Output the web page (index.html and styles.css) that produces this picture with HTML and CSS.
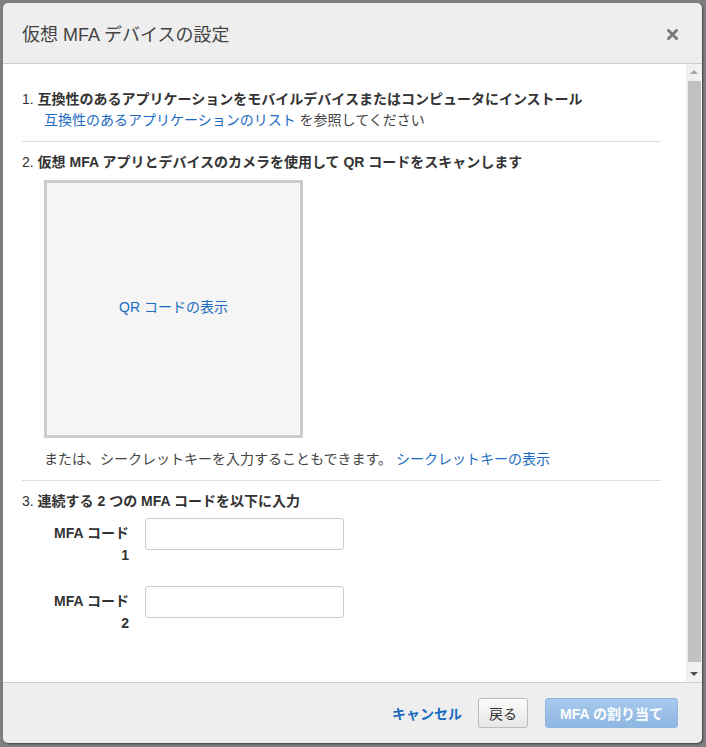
FILE: index.html
```html
<!DOCTYPE html>
<html lang="ja">
<head>
<meta charset="utf-8">
<title>仮想 MFA デバイスの設定</title>
<link rel="stylesheet" href="styles.css">
</head>
<body>
<div class="dialog">
  <div class="header">
    <h1 class="title">仮想 MFA デバイスの設定</h1>
    <span class="close" aria-label="閉じる">
      <svg width="11" height="11" viewBox="0 0 11 11"><path d="M1.5 1.5 L9.5 9.5 M9.5 1.5 L1.5 9.5" stroke="#7a7a7a" stroke-width="3" stroke-linecap="square"/></svg>
    </span>
  </div>
  <div class="body">
    <div class="content">
      <div class="section">
        <div class="step"><span class="num">1.</span> <b>互換性のあるアプリケーションをモバイルデバイスまたはコンピュータにインストール</b></div>
        <div class="indent"><a class="link" href="#">互換性のあるアプリケーションのリスト</a> を参照してください</div>
      </div>
      <div class="sep"></div>
      <div class="section">
        <div class="step"><span class="num">2.</span> <b>仮想 MFA アプリとデバイスのカメラを使用して QR コードをスキャンします</b></div>
        <div class="qr"><a class="link" href="#">QR コードの表示</a></div>
        <div class="indent secret">または、シークレットキーを入力することもできます。 <a class="link" href="#">シークレットキーの表示</a></div>
      </div>
      <div class="sep"></div>
      <div class="section">
        <div class="step"><span class="num">3.</span> <b>連続する 2 つの MFA コードを以下に入力</b></div>
        <div class="row first">
          <label class="lbl">MFA コード<br>1</label>
          <input class="inp" type="text">
        </div>
        <div class="row">
          <label class="lbl">MFA コード<br>2</label>
          <input class="inp" type="text">
        </div>
      </div>
    </div>
    <div class="scrollbar">
      <div class="arrow up"></div>
      <div class="thumb"></div>
      <div class="arrow down"></div>
    </div>
  </div>
  <div class="footer">
    <a class="cancel" href="#">キャンセル</a>
    <button class="btn back">戻る</button>
    <button class="btn primary">MFA の割り当て</button>
  </div>
</div>
</body>
</html>
```
FILE: styles.css
```css
html, body {
  margin: 0;
  padding: 0;
}
body {
  background: #7f7f7f;
  width: 706px;
  height: 747px;
  overflow: hidden;
  font-family: "Liberation Sans", "Noto Sans CJK JP", sans-serif;
  font-size: 14px;
  color: #333;
}
.dialog {
  margin: 3px 0 0 3px;
  width: 699px;
  height: 740px;
  background: #eeeeee;
  border-radius: 5px;
  box-shadow: 1px 1px 2px rgba(0,0,0,0.5);
  display: flex;
  flex-direction: column;
  overflow: hidden;
}
.header {
  height: 60px;
  flex: none;
  display: flex;
  align-items: center;
  justify-content: space-between;
  padding: 0 24px 0 19px;
  border-bottom: 1px solid #cccccc;
}
.title {
  margin: 0;
  font-size: 18px;
  font-weight: normal;
  color: #444;
}
.close {
  display: flex;
  margin-top: 2px;
}
.body {
  flex: 1;
  background: #fff;
  display: flex;
  min-height: 0;
}
.content {
  flex: 1;
  padding: 25px 25px 0 19px;
  line-height: 21px;
}
.step .num { font-weight: normal; }
.step b { font-weight: bold; }
.indent {
  padding-left: 22px;
  color: #444;
}
.link {
  color: #1a6bc1;
  text-decoration: none;
}
.sep {
  height: 1px;
  background: #dddddd;
  margin: 10px 0 10px 0;
}
.qr {
  margin: 7px 0 0 22px;
  width: 253px;
  height: 252px;
  border: 3px solid #cccccc;
  background: #f5f5f5;
  display: flex;
  align-items: center;
  justify-content: center;
}
.qr .link { margin-top: -3px; }
.secret {
  margin-top: 11px;
}
.row {
  display: flex;
  align-items: flex-start;
  margin-top: 20px;
}
.row.first { margin-top: 6px; }
.lbl {
  width: 101px;
  margin-left: 22px;
  padding: 4px 16px 0 0;
  box-sizing: border-box;
  text-align: right;
  font-weight: bold;
  line-height: 22px;
  color: #333;
}
.inp {
  width: 199px;
  height: 32px;
  box-sizing: border-box;
  border: 1px solid #cccccc;
  border-radius: 3px;
  margin: 0;
  padding: 4px 8px;
  font: inherit;
}
.scrollbar {
  width: 16px;
  flex: none;
  background: #f1f1f1;
  display: flex;
  flex-direction: column;
  align-items: center;
}
.arrow {
  width: 0;
  height: 0;
  border-left: 4px solid transparent;
  border-right: 4px solid transparent;
  flex: none;
}
.arrow.up {
  border-bottom: 4px solid #a3a3a3;
  margin: 6px 0 7px;
}
.arrow.down {
  border-top: 4px solid #505050;
  margin: 6px 0 6px;
}
.thumb {
  width: 13px;
  flex: 1;
  background: #c1c1c1;
  margin-bottom: 4px;
}
.footer {
  height: 60px;
  flex: none;
  border-top: 1px solid #cccccc;
  display: flex;
  align-items: center;
  justify-content: flex-end;
  padding-right: 24px;
}
.cancel {
  color: #1a6bc1;
  text-decoration: none;
  font-weight: bold;
  margin-right: 16px;
}
.btn {
  height: 30px;
  font-family: inherit;
  font-size: 14px;
  border-radius: 3px;
  padding: 0 12px;
  box-sizing: border-box;
}
.back {
  width: 50px;
  padding: 0;
  background: linear-gradient(#fbfbfb, #e6e6e6);
  border: 1px solid #bbbbbb;
  color: #333;
  margin-right: 17px;
}
.primary {
  width: 133px;
  background: linear-gradient(#a8c9ed, #8eb7e3);
  border: 1px solid #91b6de;
  color: #fff;
  font-weight: bold;
}
```
